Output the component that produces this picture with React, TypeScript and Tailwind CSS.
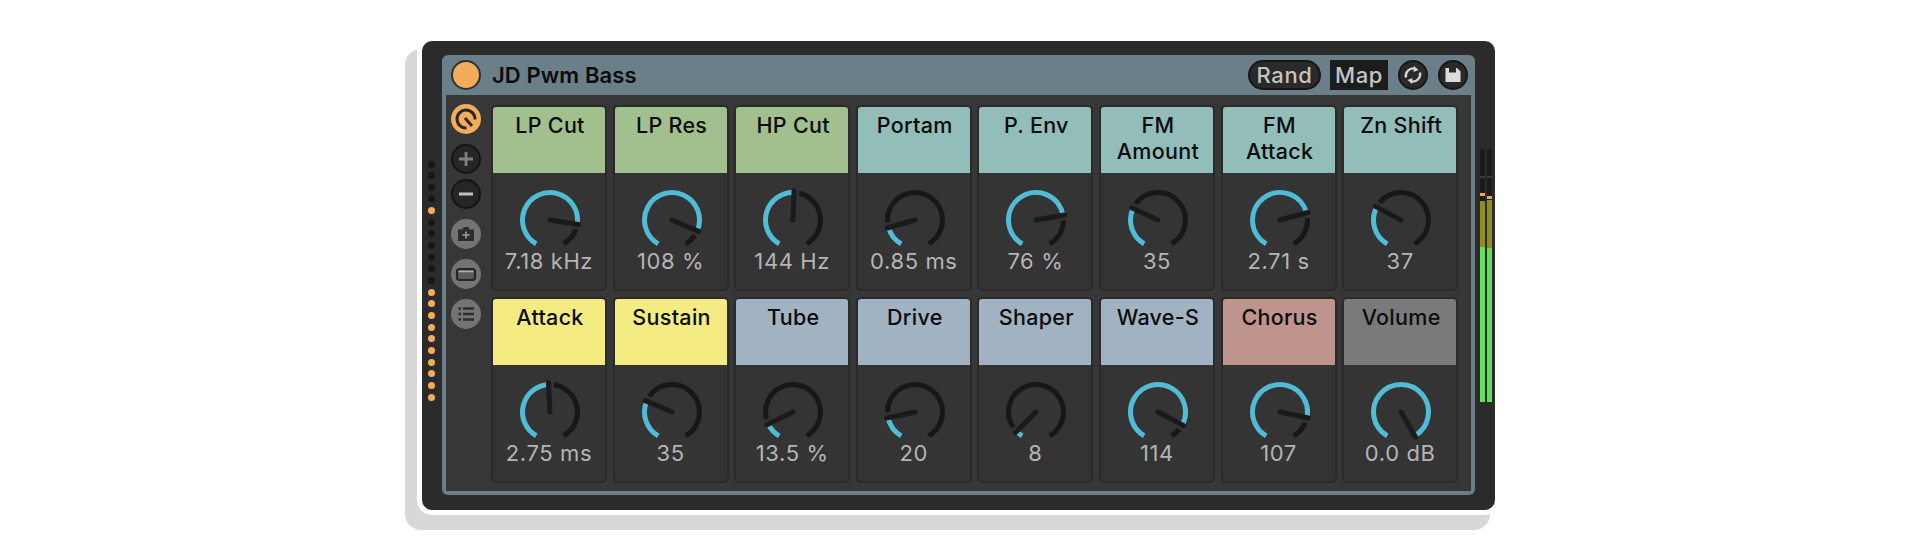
import type { ReactNode } from 'react';

interface Param {
  label: string;
  value: string;
  angle: number;
  color: string;
}

const HEADER_GREEN = 'bg-[#a2bf8e]';
const HEADER_TEAL = 'bg-[#93bdb8]';
const HEADER_YELLOW = 'bg-[#f4ec82]';
const HEADER_BLUE = 'bg-[#a1b3c3]';

const params: Param[] = [
  { label: 'LP Cut', value: '7.18 kHz', angle: 99, color: HEADER_GREEN },
  { label: 'LP Res', value: '108 %', angle: 113, color: HEADER_GREEN },
  { label: 'HP Cut', value: '144 Hz', angle: 2, color: HEADER_GREEN },
  { label: 'Portam', value: '0.85 ms', angle: -106, color: HEADER_TEAL },
  { label: 'P. Env', value: '76 %', angle: 80, color: HEADER_TEAL },
  { label: 'FM Amount', value: '35', angle: -65, color: HEADER_TEAL },
  { label: 'FM Attack', value: '2.71 s', angle: 75, color: HEADER_TEAL },
  { label: 'Zn Shift', value: '37', angle: -62, color: HEADER_TEAL },
  { label: 'Attack', value: '2.75 ms', angle: -3, color: HEADER_YELLOW },
  { label: 'Sustain', value: '35', angle: -67, color: HEADER_YELLOW },
  { label: 'Tube', value: '13.5 %', angle: -116, color: HEADER_BLUE },
  { label: 'Drive', value: '20', angle: -102, color: HEADER_BLUE },
  { label: 'Shaper', value: '8', angle: -135, color: HEADER_BLUE },
  { label: 'Wave-S', value: '114', angle: 118, color: HEADER_BLUE },
  { label: 'Chorus', value: '107', angle: 102, color: 'bg-[#bf948d]' },
  { label: 'Volume', value: '0.0 dB', angle: 150, color: 'bg-[#7a7a7a]' },
];

const litDots = [false, false, false, false, true, false, false, false, false, false, false, true, true, true, true, true, true, true, true, true, true];

function polar(radius: number, deg: number) {
  const rad = (deg * Math.PI) / 180;
  return `${(32 + radius * Math.sin(rad)).toFixed(2)} ${(32 - radius * Math.cos(rad)).toFixed(2)}`;
}

function arc(from: number, to: number) {
  const large = to - from > 180 ? 1 : 0;
  return `M${polar(27.5, from)} A27.5 27.5 0 ${large} 1 ${polar(27.5, to)}`;
}

function Knob({ angle }: { angle: number }) {
  const blackStart = angle + 11;
  return (
    <svg viewBox="0 0 64 64" className="mt-[15px] ml-[2px] h-[64px] w-[64px] shrink-0" fill="none">
      <path d={arc(-150, angle)} stroke="#50bcd6" strokeWidth="5" />
      {blackStart < 150 ? <path d={arc(blackStart, 150)} stroke="#171717" strokeWidth="5" /> : null}
      <path d={`M32 32 L${polar(29, angle)}`} stroke="#1a1a1a" strokeWidth="5" strokeLinecap="round" />
    </svg>
  );
}

function ParamCard({ label, value, angle, color }: Param) {
  return (
    <div className="flex h-[186px] flex-col items-center rounded-[5px] border-2 border-[#2a2a2a] bg-[#343434]">
      <div className={`h-[66px] w-full rounded-t-[3px] px-[6px] pt-[5px] pl-[8px] text-center text-[21.5px] leading-[26px] font-medium tracking-[0.3px] text-[#0c0c0c] ${color}`}>
        {label}
      </div>
      <Knob angle={angle} />
      <div className="-mt-[4px] text-[22px] leading-[26px] tracking-[0.6px] text-[#b4b4b4]">{value}</div>
    </div>
  );
}

function IconButton({ className, children }: { className: string; children: ReactNode }) {
  return (
    <div className={`flex h-[30px] w-[30px] shrink-0 items-center justify-center rounded-full ${className}`}>
      <svg viewBox="0 0 30 30" className="h-[30px] w-[30px] shrink-0" fill="none">
        {children}
      </svg>
    </div>
  );
}

export default function App() {
  return (
    <div className="h-[551px] w-[1920px] overflow-hidden bg-white pt-[41px] pl-[422px] font-['Inter',sans-serif]">
      <div className="flex h-[469px] w-[1073px] rounded-[10px] bg-[#2b2b2b] shadow-[0_0_0_5px_#fff,-11px_14px_0_6px_#d8d8d8]">
        {/* preset dots */}
        <div className="mr-[2px] flex w-[18px] flex-col items-center gap-[4.67px] pt-[119.5px]">
          {litDots.map((lit, i) => (
            <div key={i} className={`h-[7px] w-[7px] rounded-full ${lit ? 'bg-[#f4ab5a]' : 'bg-[#171717]'}`} />
          ))}
        </div>

        <div className="mt-[14px] flex h-[440px] w-[1033px] flex-col overflow-hidden rounded-[6px] bg-[#6a7f88] px-[4px] pb-[4px]">
          <div className="flex h-[40px] shrink-0 items-center pl-[5px]">
            <div className="h-[30px] w-[30px] rounded-full border-2 border-[#2b3438] bg-[#f4ab5a]" />
            <div className="ml-[11px] text-[22px] font-semibold tracking-[0.1px] text-[#0c0c0c]">JD Pwm Bass</div>
            <div className="ml-auto flex items-center pr-[3px]">
              <div className="flex h-[30px] w-[73px] items-center justify-center rounded-full border-2 border-[#161616] bg-[#2a2a2a] text-[22px] font-medium tracking-[0.6px] text-[#c4c4c4]">
                Rand
              </div>
              <div className="ml-[9px] flex h-[30px] w-[58px] items-center justify-center bg-[#1c1c1c] text-[22px] font-medium tracking-[0.6px] text-[#c4c4c4]">
                Map
              </div>
              <IconButton className="ml-[10px] border-2 border-[#161616] bg-[#2a2a2a]">
                <path d="M8 17.5 A7.5 7.5 0 0 1 16.5 8.5" stroke="#d4d4d4" strokeWidth="2.4" />
                <path d="M22 12.5 A7.5 7.5 0 0 1 13.5 21.5" stroke="#d4d4d4" strokeWidth="2.4" />
                <path d="M16 6 L20.5 10 L15.5 12 Z M14 24 L9.5 20 L14.5 18 Z" fill="#d4d4d4" />
              </IconButton>
              <IconButton className="ml-[10px] border-2 border-[#161616] bg-[#2a2a2a]">
                <path d="M7.5 8 H19 L22.5 11.5 V22 H7.5 Z" fill="#dcdcdc" />
                <rect x="11" y="8" width="7" height="4.5" fill="#2a2a2a" />
              </IconButton>
            </div>
          </div>

          <div className="flex min-h-0 flex-1 bg-[#373737]">
            <div className="flex w-[45px] shrink-0 flex-col items-start pt-[9px] pl-[5px]">
              <IconButton className="bg-[#f4ab5a]">
                <path d="M15.5 24 A9 9 0 1 1 24 15.5" stroke="#2a2a2a" strokeWidth="3" />
                <path d="M14 14 L21 22" stroke="#2a2a2a" strokeWidth="3" />
              </IconButton>
              <IconButton className="mt-[10px] border-2 border-[#141414] bg-[#262626]">
                <path d="M8 15 H22 M15 8 V22" stroke="#808080" strokeWidth="2.8" />
              </IconButton>
              <IconButton className="mt-[5px] border-2 border-[#141414] bg-[#262626]">
                <path d="M8 15 H22" stroke="#c0c0c0" strokeWidth="2.8" />
              </IconButton>
              <IconButton className="mt-[10px] bg-[#747474]">
                <path d="M7 10.5 H11.5 L12.5 8 H17.5 L18.5 10.5 H23 V22 H7 Z" fill="#2c2c2c" />
                <path d="M11.5 16 H18.5 M15 12.5 V19.5" stroke="#8a8a8a" strokeWidth="2" />
              </IconButton>
              <IconButton className="mt-[10px] bg-[#747474]">
                <rect x="6" y="10" width="18" height="11" rx="2.5" fill="#5c5c5c" stroke="#262626" strokeWidth="2.2" />
                <path d="M7.5 12.5 H22.5" stroke="#b0b0b0" strokeWidth="1.4" />
              </IconButton>
              <IconButton className="mt-[10px] bg-[#747474]">
                <path d="M7.5 9.5 H10 M7.5 15 H10 M7.5 20.5 H10 M12 9.5 H23 M12 15 H23 M12 20.5 H23" stroke="#2c2c2c" strokeWidth="2.4" />
              </IconButton>
            </div>

            <div className="mt-[10px] grid h-fit grid-cols-[repeat(8,116px)] gap-x-[5.6px] gap-y-[6px]">
              {params.map((param) => (
                <ParamCard key={param.label} {...param} />
              ))}
            </div>
          </div>
        </div>

        {/* output meters */}
        <div className="flex flex-1 items-start gap-[2.5px] pt-[108px] pl-[5px]">
          {[
            { peak: 'mt-[15px]', olive: 'h-[47px]', green: 'h-[155px]', gap: 'h-[5px]' },
            { peak: 'mt-[18px]', olive: 'h-[49px]', green: 'h-[155px]', gap: 'h-[1px]' },
          ].map((m, i) => (
            <div key={i} className="flex h-[253px] w-[4.5px] flex-col bg-[#1b1b1b]">
              <div className="mt-[27px] h-[2px] shrink-0 bg-[#3a3a3a]" />
              <div className={`h-[2.5px] shrink-0 bg-[#f0a858] ${m.peak}`} />
              <div className={`${m.gap} shrink-0`} />
              <div className={`bg-[#8e8d22] ${m.olive}`} />
              <div className={`bg-[#62e05c] ${m.green}`} />
            </div>
          ))}
        </div>
      </div>
    </div>
  );
}
